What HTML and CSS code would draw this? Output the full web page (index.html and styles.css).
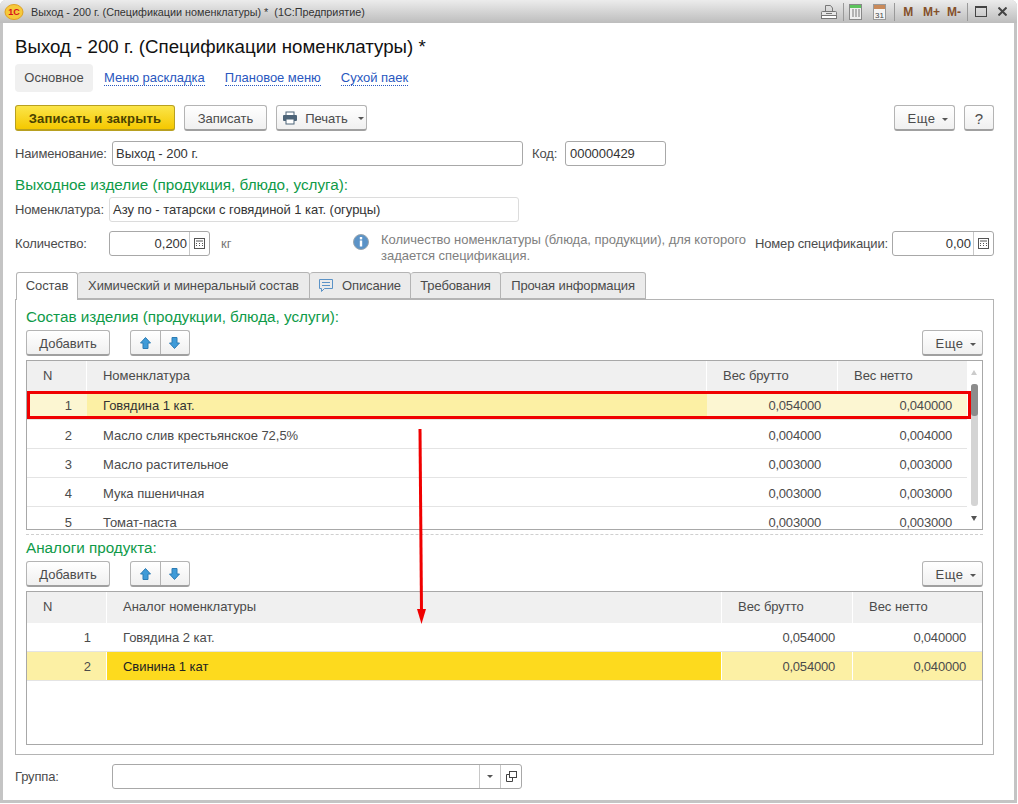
FILE: index.html
```html
<!DOCTYPE html>
<html lang="en">
<head>
    <meta charset="UTF-8">
    <meta name="viewport" content="width=device-width, initial-scale=1.0">
    <title>Выход - 200 г.</title>
    <link rel="stylesheet" href="styles.css">
</head>
<body>
<div class="window">

    <div class="titlebar">
        <svg class="logo" width="20" height="16" viewBox="0 0 20 16"><ellipse cx="10" cy="8" rx="9" ry="7.5" fill="#f6c93a" stroke="#e0a020"/><text x="10" y="11" font-size="9" font-weight="bold" fill="#d8121a" text-anchor="middle" font-family="Liberation Sans">1С</text></svg>
        <span class="titlebar-text">Выход - 200 г. (Спецификации номенклатуры) *&nbsp; (1С:Предприятие)</span>
        <div class="titlebar-tools">
            <svg width="16" height="16" viewBox="0 0 16 16" fill="none" stroke="#777"><path d="M4.500 7V1.500h5l2 2.500V7"/><rect x=".5" y="7.500" width="15" height="4" rx="1" fill="#e8e8e8"/><rect x=".5" y="11.500" width="15" height="3" fill="#fff"/><path d="M5 9.500h6"/></svg>
            <span class="tool-sep sep-a"></span>
            <svg class="tool-calc" width="13" height="16" viewBox="0 0 13 16"><rect x=".5" y=".5" width="12" height="15" fill="#eee" stroke="#888"/><rect x="1" y="1" width="11" height="3" fill="#5cc45c"/><path d="M3 6h2M6 6h2M9 6h2M3 8h2M6 8h2M9 8h2M3 10h2M6 10h2M9 10h2M3 12h2M6 12h2M9 12h2" stroke="#777"/></svg>
            <svg class="tool-date" width="13" height="16" viewBox="0 0 13 16"><rect x=".5" y=".5" width="12" height="15" fill="#f4f4f4" stroke="#999"/><rect x="1" y="1" width="11" height="4" fill="#c98a5a"/><text x="6.500" y="13.500" font-size="8" fill="#444" text-anchor="middle" font-family="Liberation Sans">31</text></svg>
            <span class="tool-sep sep-b"></span>
            <span class="mem mem-m">M</span>
            <span class="mem mem-plus">M+</span>
            <span class="mem mem-minus">M-</span>
            <span class="tool-sep sep-c"></span>
            <svg class="tool-restore" width="12" height="11" viewBox="0 0 12 11" fill="none" stroke="#444"><rect x=".5" y=".5" width="11" height="10"/><path d="M0 1.500h12"/></svg>
            <svg class="tool-close" width="9" height="9" viewBox="0 0 9 9" stroke="#444" stroke-width="2"><path d="M.5.5l8 8M8.500.5l-8 8"/></svg>
        </div>
    </div>

    <div class="form">
        <h1>Выход - 200 г. (Спецификации номенклатуры) *</h1>

        <div class="nav">
            <span class="nav-active">Основное</span>
            <a class="nav-link">Меню раскладка</a>
            <a class="nav-link">Плановое меню</a>
            <a class="nav-link">Сухой паек</a>
        </div>

        <div class="toolbar">
            <button class="btn btn-primary">Записать и закрыть</button>
            <button class="btn btn-save">Записать</button>
            <button class="btn btn-print">
                <svg width="16" height="14" viewBox="0 0 16 14"><rect x="4" y="1" width="8" height="4" fill="#fff" stroke="#4d6478"/><rect x="1" y="4" width="14" height="6" rx="1" fill="#4d6478"/><rect x="4" y="8" width="8" height="5" fill="#fff" stroke="#4d6478"/></svg>
                Печать <i class="caret"></i>
            </button>
            <button class="btn btn-more toolbar-right">Еще <i class="caret"></i></button>
            <button class="btn btn-help">?</button>
        </div>

        <div class="row row-name">
            <label class="lbl lbl-name">Наименование:</label>
            <div class="field field-name">Выход - 200 г.</div>
            <label class="lbl lbl-code">Код:</label>
            <div class="field field-code">000000429</div>
        </div>

        <div class="group-title">Выходное изделие (продукция, блюдо, услуга):</div>

        <div class="row row-item">
            <label class="lbl lbl-item">Номенклатура:</label>
            <div class="field field-item">Азу по - татарски с говядиной 1 кат. (огурцы)</div>
        </div>

        <div class="row row-qty">
            <label class="lbl lbl-item">Количество:</label>
            <div class="field field-num field-qty"><span class="num-val">0,200</span><span class="calc"><svg width="11" height="11" viewBox="0 0 11 11" fill="none" stroke="#555"><rect x=".5" y=".5" width="10" height="10"/><path d="M2 3h7M2 5.500h1M5 5.500h1M8 5.500h1M2 7.500h1M5 7.500h1M8 7.500h1"/></svg></span></div>
            <span class="unit">кг</span>
            <svg class="info-icon" width="16" height="16" viewBox="0 0 16 16"><circle cx="8" cy="8" r="7.500" fill="#5b93c7" stroke="#9aa5ad"/><rect x="6.800" y="6.500" width="2.400" height="6" fill="#fff"/><rect x="6.800" y="3" width="2.400" height="2.400" fill="#fff"/></svg>
            <div class="hint">Количество номенклатуры (блюда, продукции), для которого задается спецификация.</div>
            <label class="lbl lbl-spec">Номер спецификации:</label>
            <div class="field field-num field-spec"><span class="num-val">0,00</span><span class="calc"><svg width="11" height="11" viewBox="0 0 11 11" fill="none" stroke="#555"><rect x=".5" y=".5" width="10" height="10"/><path d="M2 3h7M2 5.500h1M5 5.500h1M8 5.500h1M2 7.500h1M5 7.500h1M8 7.500h1"/></svg></span></div>
        </div>

        <div class="tabs">
            <div class="tab tab-active">Состав</div>
            <div class="tab tab-chem">Химический и минеральный состав</div>
            <div class="tab tab-desc"><svg width="14" height="13" viewBox="0 0 14 13" fill="none" stroke="#5b93c7"><path d="M.5.5h13v9h-8l-3 3v-3h-2z"/><path d="M3 3.500h8M3 6.500h8"/></svg>Описание</div>
            <div class="tab tab-req">Требования</div>
            <div class="tab tab-other">Прочая информация</div>
        </div>

        <div class="panel">
            <div class="group-title panel-title">Состав изделия (продукции, блюда, услуги):</div>
            <div class="table-tools">
                <button class="btn btn-add">Добавить</button>
                <div class="arrows">
                    <button class="arrow-btn"><svg width="11" height="12" viewBox="0 0 11 12"><path d="M5.500.5l5 5.500H8v5.500H3V6H.5z" fill="#3f9bd8" stroke="#2c7cb4"/></svg></button>
                    <button class="arrow-btn"><svg width="11" height="12" viewBox="0 0 11 12"><path d="M5.500 11.500L.5 6H3V.5h5V6h2.500z" fill="#3f9bd8" stroke="#2c7cb4"/></svg></button>
                </div>
                <button class="btn btn-more toolbar-right">Еще <i class="caret"></i></button>
            </div>

            <div class="grid grid-main">
                <div class="grid-body">
                    <div class="grid-row grid-head">
                        <div class="c c-n">N</div><div class="c c-name">Номенклатура</div><div class="c c-w">Вес брутто</div><div class="c c-w">Вес нетто</div>
                    </div>
                    <div class="grid-row row-current">
                        <div class="c c-n num">1</div><div class="c c-name">Говядина 1 кат.</div><div class="c c-w num">0,054000</div><div class="c c-w num">0,040000</div>
                    </div>
                    <div class="grid-row">
                        <div class="c c-n num">2</div><div class="c c-name">Масло слив крестьянское 72,5%</div><div class="c c-w num">0,004000</div><div class="c c-w num">0,004000</div>
                    </div>
                    <div class="grid-row">
                        <div class="c c-n num">3</div><div class="c c-name">Масло растительное</div><div class="c c-w num">0,003000</div><div class="c c-w num">0,003000</div>
                    </div>
                    <div class="grid-row">
                        <div class="c c-n num">4</div><div class="c c-name">Мука пшеничная</div><div class="c c-w num">0,003000</div><div class="c c-w num">0,003000</div>
                    </div>
                    <div class="grid-row">
                        <div class="c c-n num">5</div><div class="c c-name">Томат-паста</div><div class="c c-w num">0,003000</div><div class="c c-w num">0,003000</div>
                    </div>
                </div>
                <div class="scrollbar">
                    <i class="scroll-up"></i>
                    <div class="scroll-track"><div class="scroll-thumb"></div></div>
                    <i class="scroll-down"></i>
                </div>
                <div class="red-frame"></div>
            </div>

            <div class="splitter"></div>

            <div class="group-title analog-title">Аналоги продукта:</div>
            <div class="table-tools">
                <button class="btn btn-add">Добавить</button>
                <div class="arrows">
                    <button class="arrow-btn"><svg width="11" height="12" viewBox="0 0 11 12"><path d="M5.500.5l5 5.500H8v5.500H3V6H.5z" fill="#3f9bd8" stroke="#2c7cb4"/></svg></button>
                    <button class="arrow-btn"><svg width="11" height="12" viewBox="0 0 11 12"><path d="M5.500 11.500L.5 6H3V.5h5V6h2.500z" fill="#3f9bd8" stroke="#2c7cb4"/></svg></button>
                </div>
                <button class="btn btn-more toolbar-right">Еще <i class="caret"></i></button>
            </div>

            <div class="grid grid-analog">
                <div class="grid-body">
                    <div class="grid-row grid-head">
                        <div class="c c-n">N</div><div class="c c-name">Аналог номенклатуры</div><div class="c c-w">Вес брутто</div><div class="c c-w">Вес нетто</div>
                    </div>
                    <div class="grid-row">
                        <div class="c c-n num">1</div><div class="c c-name">Говядина 2 кат.</div><div class="c c-w num">0,054000</div><div class="c c-w num">0,040000</div>
                    </div>
                    <div class="grid-row row-selected">
                        <div class="c c-n num">2</div><div class="c c-name">Свинина 1 кат</div><div class="c c-w num">0,054000</div><div class="c c-w num">0,040000</div>
                    </div>
                </div>
            </div>
        </div>

        <div class="row row-group">
            <label class="lbl lbl-name">Группа:</label>
            <div class="field field-group">
                <span class="group-btn"><i class="caret"></i></span>
                <span class="group-btn"><svg width="11" height="11" viewBox="0 0 11 11" fill="none" stroke="#444"><rect x="3.500" y=".5" width="7" height="6"/><path d="M3.500 3.500H.5v7h6V6.500"/></svg></span>
            </div>
        </div>

        <!-- red arrow is part of the screenshot annotation -->
        <svg class="red-arrow" width="14" height="196" viewBox="0 0 14 196"><path d="M5 0L6.500 182" stroke="#f00000" stroke-width="3" fill="none"/><path d="M2 180h9l-4.500 15z" fill="#f00000"/></svg>
    </div>
</div>
</body>
</html>
```

FILE: styles.css
```css
* {
    box-sizing: border-box;
}

body {
    margin: 0;
    background-color: #fff;
    font-family: "Liberation Sans", Arial, sans-serif;
    font-size: 13px;
    letter-spacing: -0.03px;
    color: #4b4b4b;
}

.window {
    position: relative;
    width: 1017px;
    height: 803px;
    background-color: #fff;
    border-left: 3px solid #c4c4c4;
    border-right: 3px solid #c4c4c4;
    border-bottom: 3px solid #c4c4c4;
    border-radius: 6px 6px 0 0;
}

.titlebar {
    display: flex;
    align-items: center;
    height: 23px;
    margin-left: -3px;
    margin-right: -3px;
    padding-left: 4px;
    background: linear-gradient(#ececec, #bdbdbd);
    border-radius: 6px 6px 0 0;
}

.titlebar-text {
    margin-left: 7px;
    font-size: 10.8px;
    letter-spacing: 0;
    color: #333;
}

.titlebar-tools {
    display: flex;
    align-items: center;
    margin-left: auto;
    padding-right: 10px;
}

.tool-sep {
    width: 1px;
    height: 18px;
    background-color: #999;
}

.sep-a {
    margin-left: 6px;
}

.tool-calc {
    margin-left: 5px;
}

.tool-date {
    margin-left: 11px;
}

.sep-b {
    margin-left: 8px;
}

.mem {
    font-size: 12px;
    font-weight: bold;
    color: #84502a;
}

.mem-m {
    margin-left: 8px;
}

.mem-plus {
    margin-left: 10px;
}

.mem-minus {
    margin-left: 7px;
}

.sep-c {
    margin-left: 6px;
}

.tool-restore {
    margin-left: 7px;
}

.tool-close {
    margin-left: 11px;
}

.form {
    position: relative;
    padding: 0 0 0 12px;
}

h1 {
    margin: 0;
    padding-top: 12px;
    height: 41px;
    font-size: 18.7px;
    font-weight: normal;
    line-height: 23px;
    letter-spacing: 0;
    color: #111;
}

.nav {
    display: flex;
    align-items: center;
    height: 28px;
}

.nav-active {
    width: 78px;
    height: 28px;
    line-height: 28px;
    text-align: center;
    background-color: #f0f0f0;
    border-radius: 4px;
}

.nav-link {
    margin-left: 11px;
    margin-right: 9px;
    color: #2a58c0;
    border-bottom: 1px dotted #2a58c0;
    line-height: 14px;
}

.toolbar {
    display: flex;
    align-items: center;
    width: 979px;
    margin-top: 13px;
    gap: 9px;
}

.toolbar-right {
    margin-left: auto;
}

.btn {
    height: 26px;
    padding: 1px 0 0;
    font-family: inherit;
    font-size: 13px;
    color: #4b4b4b;
    background: linear-gradient(#fff, #f0f0f0);
    border: 1px solid #b4b4b4;
    border-bottom: 2px solid #a0a0a0;
    border-radius: 3px;
}

.btn-primary {
    width: 160px;
    font-weight: bold;
    letter-spacing: 0.2px;
    color: #4a4200;
    background: linear-gradient(#fbe54a, #f5c800);
    border-color: #b8a020;
}

.btn-save {
    width: 83px;
}

.btn-print {
    display: flex;
    align-items: center;
    justify-content: center;
    gap: 7px;
    width: 91px;
    padding-left: 3px;
}

.btn-more {
    width: 61px;
    padding-left: 6px;
    letter-spacing: 0.5px;
}

.btn-more .caret {
    margin-left: 2px;
}

.btn-help {
    width: 30px;
    font-size: 15px;
}

.caret {
    display: inline-block;
    margin-left: 3px;
    vertical-align: middle;
    border-top: 3px solid #555;
    border-left: 3px solid transparent;
    border-right: 3px solid transparent;
}

.row {
    display: flex;
    align-items: center;
}

.lbl {
    letter-spacing: -0.15px;
}

.row-name {
    margin-top: 10px;
    height: 25px;
}

.lbl-name {
    width: 97px;
}

.lbl-code {
    margin-left: 9px;
    width: 33px;
}

.field {
    height: 25px;
    line-height: 24px;
    padding-left: 3px;
    border: 1px solid #a8a8a8;
    border-radius: 3px;
    background-color: #fff;
    color: #333;
}

.field-name {
    width: 411px;
}

.field-code {
    width: 101px;
    padding-left: 4px;
}

.group-title {
    font-size: 15.25px;
    letter-spacing: 0;
    color: #0e9a48;
    line-height: 20px;
}

.row-name + .group-title {
    margin-top: 9px;
}

.row-item {
    margin-top: 2px;
    height: 25px;
}

.lbl-item {
    width: 94px;
}

.field-item {
    width: 410px;
    padding-left: 3px;
    border-color: #dcdcdc;
}

.row-qty {
    margin-top: 9px;
    height: 25px;
}

.field-num {
    display: flex;
    justify-content: flex-end;
    padding: 0;
}

.num-val {
    padding-right: 2px;
}

.calc {
    display: flex;
    align-items: center;
    justify-content: center;
    width: 20px;
    border-left: 1px solid #c8c8c8;
}

.field-qty {
    width: 101px;
}

.unit {
    margin-left: 11px;
    width: 132px;
    color: #777;
}

.info-icon {
    flex: none;
    margin-top: -3px;
}

.hint {
    flex: none;
    width: 374px;
    margin-left: 12px;
    margin-top: 8px;
    line-height: 16px;
    color: #808080;
}

.lbl-spec {
    flex: none;
    width: 137px;
}

.field-spec {
    width: 102px;
}

.tabs {
    display: flex;
    margin-top: 16px;
    padding-left: 1px;
    height: 27px;
}

.tab {
    height: 27px;
    line-height: 26px;
    text-align: center;
    letter-spacing: -0.12px;
    background-color: #ebebeb;
    border: 1px solid #b4b4b4;
    border-left: 0;
    border-radius: 3px 3px 0 0;
    white-space: nowrap;
}

.tab-active {
    width: 62px;
    height: 28px;
    background-color: #fff;
    border-left: 1px solid #b4b4b4;
    border-bottom: 0;
    z-index: 1;
}

.tab-chem {
    width: 232px;
}

.tab-desc {
    display: flex;
    align-items: center;
    justify-content: center;
    gap: 9px;
    width: 101px;
}

.tab-req {
    width: 90px;
}

.tab-other {
    width: 145px;
}

.panel {
    width: 979px;
    height: 456px;
    padding: 0 10px;
    border: 1px solid #b4b4b4;
}

.panel-title {
    margin-top: 7px;
}

.table-tools {
    display: flex;
    align-items: center;
    margin-top: 3px;
    height: 26px;
}

.btn-add {
    width: 84px;
}

.arrows {
    display: flex;
    margin-left: 20px;
    width: 60px;
    height: 26px;
    border: 1px solid #b4b4b4;
    border-bottom: 2px solid #a0a0a0;
    border-radius: 3px;
    background: linear-gradient(#fff, #f0f0f0);
}

.arrow-btn {
    flex: 1;
    display: flex;
    align-items: center;
    justify-content: center;
    padding: 0;
    background: none;
    border: 0;
}

.arrow-btn + .arrow-btn {
    border-left: 1px solid #b4b4b4;
}

.grid {
    position: relative;
    display: flex;
    width: 957px;
    margin-top: 4px;
    border: 1px solid #a8a8a8;
    overflow: hidden;
}

.grid-main {
    height: 170px;
}

.grid-analog {
    height: 154px;
}

.grid-body {
    flex: 1;
    min-width: 0;
}

.grid-row {
    display: flex;
    height: 29px;
    line-height: 30px;
    border-bottom: 1px solid #e4e4e4;
}

.grid-main .grid-row {
    line-height: 32px;
}

.grid-main .row-current {
    line-height: 30px;
}

.grid-head {
    height: 30px;
    background-color: #f0f0f0;
    border-bottom: 0;
}

.grid-analog .grid-head {
    height: 31px;
}

.c {
    flex: none;
    padding: 0 16px;
    border-right: 1px solid #e4e4e4;
    white-space: nowrap;
}

.grid-head .c {
    border-right-color: #fff;
    line-height: 29px;
}

.c-n {
    padding: 0;
    padding-left: 16px;
    width: 60px;
}

.c-n.num {
    padding-right: 15px;
    padding-left: 0;
}

.c-name {
    width: 620px;
}

.c-w {
    width: 130px;
}

.c-name + .c-w {
    width: 131px;
    padding-right: 17px;
}

.num {
    text-align: right;
}

.c-w.num {
    letter-spacing: -0.2px;
}

.grid-main .grid-row:not(.grid-head) .c {
    border-right: 0;
}

.row-current {
    background-color: #fcf6d2;
}

.row-current .c-name {
    background-color: #fcf0a4;
    color: #333;
}

.red-frame {
    position: absolute;
    left: 0;
    top: 30px;
    width: 944px;
    height: 28px;
    border: 3px solid #f00000;
}

.scrollbar {
    flex: none;
    width: 15px;
    position: relative;
    background-color: #fff;
}

.scroll-up,
.scroll-down {
    position: absolute;
    left: 4px;
    border-left: 3px solid transparent;
    border-right: 3px solid transparent;
}

.scroll-up {
    top: 9px;
    border-bottom: 5px solid #ccc;
}

.scroll-down {
    bottom: 8px;
    border-top: 5px solid #555;
}

.scroll-track {
    position: absolute;
    left: 4px;
    top: 23px;
    width: 7px;
    height: 122px;
    background-color: #d4d4d4;
    border-radius: 3px;
}

.scroll-thumb {
    height: 32px;
    background-color: #8c8c8c;
    border-radius: 3px;
}

.splitter {
    margin-top: 4px;
    border-top: 1px dashed #cfcfcf;
}

.analog-title {
    margin-top: 3px;
}

.grid-analog .c-n {
    width: 80px;
}

.grid-analog .c-name {
    width: 615px;
}

.grid-analog .grid-row:not(.grid-head) .c {
    border-right-color: #fff;
}

.row-selected {
    background-color: #fcf0a4;
}

.row-selected .c-name {
    background-color: #fdda1e;
    color: #222;
}

.row-group {
    margin-top: 9px;
    height: 25px;
}

.field-group {
    display: flex;
    justify-content: flex-end;
    width: 410px;
    padding: 0;
}

.group-btn {
    display: flex;
    align-items: center;
    justify-content: center;
    width: 21px;
    border-left: 1px solid #c8c8c8;
}

.group-btn .caret {
    margin: 0;
}

.red-arrow {
    position: absolute;
    left: 412px;
    top: 406px;
}
```
